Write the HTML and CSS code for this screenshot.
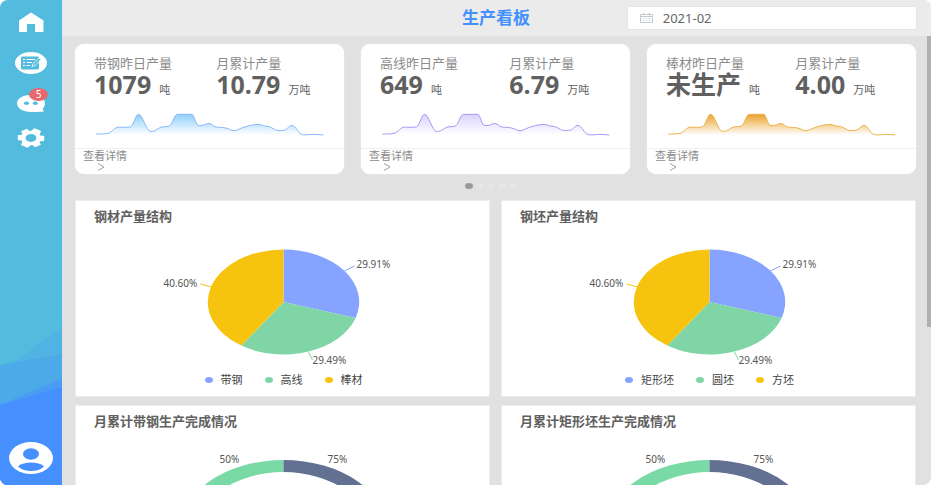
FILE: index.html
```html
<!DOCTYPE html>
<html lang="zh-CN">

<head>
    <meta charset="UTF-8">
    <meta name="viewport" content="width=device-width, initial-scale=1.0">
    <title>生产看板</title>
    <link rel="stylesheet" href="styles.css">
</head>

<body>
    <!-- shared shapes for the charts -->
    <svg class="defs" width="0" height="0" aria-hidden="true">
        <defs>
            <linearGradient id="fillBlue" x1="0" y1="0" x2="0" y2="1">
                <stop offset="0" stop-color="#8fd0f8" />
                <stop offset="1" stop-color="#ffffff" />
            </linearGradient>
            <linearGradient id="fillPurple" x1="0" y1="0" x2="0" y2="1">
                <stop offset="0" stop-color="#d9d3fd" />
                <stop offset="1" stop-color="#ffffff" />
            </linearGradient>
            <linearGradient id="fillOrange" x1="0" y1="0" x2="0" y2="1">
                <stop offset="0" stop-color="#eba32c" />
                <stop offset="1" stop-color="#ffffff" />
            </linearGradient>
            <path id="sparkLine" d="M1 64 C15 64 25 64 36 62 C50 58 55 43 68 43 C80 43 92 45 104 42 C114 36 118 5 128 4 C140 4 150 55 164 56 C180 58 186 43 201 42 C210 41 216 42 222 38 C232 30 234 4 245 4 L288 4 C297 10 298 38 309 38 C322 40 330 32 339 32 C349 32 350 42 361 43 C372 44 380 43 390 46 C400 48 405 54 414 54 C424 54 436 44 451 41 C464 37 474 35 486 35 C498 35 500 40 510 40 C530 42 534 53 546 53 C558 53 562 54 568 51 C578 46 578 38 588 38 C600 38 606 64 620 66 C634 68 640 65 650 65 C662 65 672 66 682 67" />
            <path id="sparkArea" d="M1 64 C15 64 25 64 36 62 C50 58 55 43 68 43 C80 43 92 45 104 42 C114 36 118 5 128 4 C140 4 150 55 164 56 C180 58 186 43 201 42 C210 41 216 42 222 38 C232 30 234 4 245 4 L288 4 C297 10 298 38 309 38 C322 40 330 32 339 32 C349 32 350 42 361 43 C372 44 380 43 390 46 C400 48 405 54 414 54 C424 54 436 44 451 41 C464 37 474 35 486 35 C498 35 500 40 510 40 C530 42 534 53 546 53 C558 53 562 54 568 51 C578 46 578 38 588 38 C600 38 606 64 620 66 L682 67 L1 67 Z" />
            <g id="pie">
                <path fill="#85a3ff" d="M200 62 V9.500 A75.700 52.500 0 0 1 272.100 78 Z" />
                <path fill="#7fd5a6" d="M200 62 L272.100 78 A75.700 52.500 0 0 1 157.800 105.600 Z" />
                <path fill="#f6c40e" d="M200 62 L157.800 105.600 A75.700 52.500 0 0 1 200 9.500 Z" />
                <path class="lead" stroke="#85a3ff" d="M261 31 L271 26" />
                <path class="lead" stroke="#7fd5a6" d="M225 112 L229 120" />
                <path class="lead" stroke="#f6c40e" d="M117 44 L128 47" />
            </g>
            <g id="ring">
                <path fill="#7adaa5" d="M200 15 A105 73 0 0 0 200 161 V149 A87 61 0 0 1 200 27 Z" />
                <path fill="#627092" d="M200 15 A105 73 0 0 1 200 161 V149 A87 61 0 0 0 200 27 Z" />
            </g>
        </defs>
    </svg>

    <div class="app">
        <nav class="sidebar">
            <svg class="waves" viewBox="0 0 62 160" preserveAspectRatio="none" aria-hidden="true">
                <path fill="#50b3e3" d="M0 48 L62 2 V160 H0 Z" />
                <path fill="#4caae9" d="M0 40 L62 29 V160 H0 Z" />
                <path fill="#4a9df3" d="M0 80 L62 53 V160 H0 Z" />
                <path fill="#468fff" d="M0 80 L62 62 V160 H0 Z" />
            </svg>

            <a class="nav-link" href="#" aria-label="首页">
                <svg width="26" height="24" viewBox="0 0 26 24">
                    <path fill="#fff" d="M13 .5 L25.500 8.500 V20 H17 V12 H9 V20 H1 V8.500 Z" />
                </svg>
            </a>
            <a class="nav-link" href="#" aria-label="报表">
                <svg width="32" height="22" viewBox="0 0 32 22">
                    <ellipse cx="16" cy="11" rx="16" ry="11" fill="#fff" />
                    <rect x="6" y="4.500" width="18" height="13" rx="1.500" fill="#53bbde" />
                    <path stroke="#fff" stroke-width="1" d="M8 7.500 H10 M11.500 7.500 H20 M8 10.500 H10 M11.500 10.500 H17 M8 13.500 H10 M11.500 13.500 H15" />
                    <path fill="#53bbde" stroke="#fff" stroke-width=".8" d="M17 14.500 L18 11.500 L24 6 L26 7.500 L20 13.500 Z" />
                </svg>
            </a>
            <a class="nav-link" href="#" aria-label="消息">
                <svg width="28" height="22" viewBox="0 0 28 22">
                    <path fill="#fff" d="M14 5 C21.500 5 28 8.500 28 13 C28 15.500 27 17.500 25.500 19 L27 21.500 C20 22 19 22 14 22 C6 22 0 18.500 0 13.300 C0 8.500 6 5 14 5 Z" />
                    <ellipse cx="9.500" cy="13.300" rx="2.500" ry="1.700" fill="#53bbde" />
                    <ellipse cx="18.300" cy="13.300" rx="2.500" ry="1.700" fill="#53bbde" />
                </svg>
                <span class="badge">5</span>
            </a>
            <a class="nav-link" href="#" aria-label="设置">
                <svg width="28" height="20" viewBox="1 1 22 22" preserveAspectRatio="none">
                    <path fill="#fff" stroke="#fff" stroke-width="1.500" stroke-linejoin="round" transform="rotate(30 12 12)" d="M19.400 13 C19.500 12.300 19.500 11.700 19.400 11 L21.600 9.300 L19.500 5.700 L16.900 6.700 C16.400 6.300 15.800 6 15.200 5.700 L14.400 2 H9.600 L8.800 5.700 C8.200 6 7.600 6.300 7.100 6.700 L4.500 5.700 L2.400 9.300 L4.600 11 C4.500 11.700 4.500 12.300 4.600 13 L2.400 14.700 L4.500 18.300 L7.100 17.300 C7.600 17.700 8.200 18 8.800 18.300 L9.600 22 H14.400 L15.200 18.300 C15.800 18 16.400 17.700 16.900 17.300 L19.500 18.300 L21.600 14.700 Z" />
                    <circle cx="12" cy="12" r="4.300" fill="#53bbde" />
                </svg>
            </a>
            <a class="nav-link user" href="#" aria-label="个人中心">
                <svg width="44" height="32" viewBox="0 0 44 32">
                    <ellipse cx="22" cy="16" rx="22" ry="16" fill="#fff" />
                    <ellipse cx="22" cy="12" rx="8" ry="5.800" fill="#468fff" />
                    <path fill="#468fff" d="M9 24.500 C12 21.500 17 20.500 22 20.500 C27 20.500 32 21.500 35 24.500 C32 27.500 27 29 22 29 C17 29 12 27.500 9 24.500 Z" />
                </svg>
            </a>
        </nav>

        <div class="page">
            <header class="topbar">
                <h1>生产看板</h1>
                <label class="date-box">
                    <svg width="13" height="10" viewBox="0 0 13 10" fill="none" stroke="#c5c9d2" aria-hidden="true">
                        <path d="M.5 1.500 H12.500 V9.500 H.5 Z M.5 3.500 H12.500 M3.500 0 V2.500 M9.500 0 V2.500" />
                        <path stroke="#e0e2e8" stroke-dasharray="2 1" d="M2.500 5.500 H11 M2.500 7.500 H11" />
                    </svg>
                    <input type="text" value="2021-02" aria-label="选择月份">
                </label>
            </header>

            <main class="content">
                <section class="cards">
                    <article class="card blue">
                        <div class="figures">
                            <div class="figure">
                                <p>带钢昨日产量</p>
                                <strong>1079</strong><span>吨</span>
                            </div>
                            <div class="figure">
                                <p>月累计产量</p>
                                <strong>10.79</strong><span>万吨</span>
                            </div>
                        </div>
                        <svg class="spark" viewBox="0 0 684 70" preserveAspectRatio="none">
                            <use href="#sparkArea" fill="url(#fillBlue)" />
                            <use class="line" href="#sparkLine" />
                        </svg>
                        <a class="more" href="#">查看详情
                            <svg width="8" height="8" viewBox="0 0 8 8"><path d="M1 .5 L7 4 L1 7.500" /></svg>
                        </a>
                    </article>

                    <article class="card purple">
                        <div class="figures">
                            <div class="figure">
                                <p>高线昨日产量</p>
                                <strong>649</strong><span>吨</span>
                            </div>
                            <div class="figure">
                                <p>月累计产量</p>
                                <strong>6.79</strong><span>万吨</span>
                            </div>
                        </div>
                        <svg class="spark" viewBox="0 0 684 70" preserveAspectRatio="none">
                            <use href="#sparkArea" fill="url(#fillPurple)" />
                            <use class="line" href="#sparkLine" />
                        </svg>
                        <a class="more" href="#">查看详情
                            <svg width="8" height="8" viewBox="0 0 8 8"><path d="M1 .5 L7 4 L1 7.500" /></svg>
                        </a>
                    </article>

                    <article class="card orange">
                        <div class="figures">
                            <div class="figure">
                                <p>棒材昨日产量</p>
                                <strong>未生产</strong><span>吨</span>
                            </div>
                            <div class="figure">
                                <p>月累计产量</p>
                                <strong>4.00</strong><span>万吨</span>
                            </div>
                        </div>
                        <svg class="spark" viewBox="0 0 684 70" preserveAspectRatio="none">
                            <use href="#sparkArea" fill="url(#fillOrange)" />
                            <use class="line" href="#sparkLine" />
                        </svg>
                        <a class="more" href="#">查看详情
                            <svg width="8" height="8" viewBox="0 0 8 8"><path d="M1 .5 L7 4 L1 7.500" /></svg>
                        </a>
                    </article>
                </section>

                <div class="dots">
                    <button type="button" class="active" aria-label="第1页"></button>
                    <button type="button" aria-label="第2页"></button>
                    <button type="button" aria-label="第3页"></button>
                    <button type="button" aria-label="第4页"></button>
                    <button type="button" aria-label="第5页"></button>
                </div>

                <section class="panels">
                    <article class="panel">
                        <h2>钢材产量结构</h2>
                        <svg class="chart" height="130" viewBox="0 0 400 130">
                            <use href="#pie" />
                            <text x="273" y="28">29.91%</text>
                            <text x="80" y="47">40.60%</text>
                            <text x="229" y="124">29.49%</text>
                        </svg>
                        <ul class="legend">
                            <li class="c1">带钢</li>
                            <li class="c2">高线</li>
                            <li class="c3">棒材</li>
                        </ul>
                    </article>

                    <article class="panel">
                        <h2>钢坯产量结构</h2>
                        <svg class="chart" height="130" viewBox="0 0 400 130">
                            <use href="#pie" />
                            <text x="273" y="28">29.91%</text>
                            <text x="80" y="47">40.60%</text>
                            <text x="229" y="124">29.49%</text>
                        </svg>
                        <ul class="legend">
                            <li class="c1">矩形坯</li>
                            <li class="c2">圆坯</li>
                            <li class="c3">方坯</li>
                        </ul>
                    </article>

                    <article class="panel">
                        <h2>月累计带钢生产完成情况</h2>
                        <svg class="chart" height="170" viewBox="0 0 400 170">
                            <use href="#ring" />
                            <text x="136" y="18">50%</text>
                            <text x="244" y="18">75%</text>
                        </svg>
                    </article>

                    <article class="panel">
                        <h2>月累计矩形坯生产完成情况</h2>
                        <svg class="chart" height="170" viewBox="0 0 400 170">
                            <use href="#ring" />
                            <text x="136" y="18">50%</text>
                            <text x="244" y="18">75%</text>
                        </svg>
                    </article>
                </section>
            </main>
            <div class="scroll-thumb"></div>
        </div>
    </div>
</body>

</html>
```
FILE: styles.css
```css
* {
    box-sizing: border-box;
}

body {
    margin: 0;
    background: #fff;
    color: #606060;
    font-family: "Noto Sans", "Noto Sans CJK SC", sans-serif;
    font-size: 13px;
}

h1, h2, p, ul {
    margin: 0;
    padding: 0;
}

svg {
    display: block;
}

.defs {
    position: absolute;
}

.app {
    display: flex;
    height: 100vh;
    border-radius: 8px;
    overflow: hidden;
    background: #e1e1e1;
}

/* sidebar */
.sidebar {
    position: relative;
    flex: none;
    display: flex;
    flex-direction: column;
    align-items: center;
    gap: 16px;
    width: 62px;
    padding: 12px 0 11px;
    background: #53bbde;
}

.waves {
    position: absolute;
    left: 0;
    bottom: 0;
    width: 100%;
    height: 160px;
}

.nav-link {
    position: relative;
}

.user {
    margin-top: auto;
}

.badge {
    position: absolute;
    top: -2px;
    right: -3px;
    width: 19px;
    height: 13px;
    border-radius: 50%;
    background: #e8686e;
    color: #fff;
    font-size: 10px;
    line-height: 13px;
    text-align: center;
}

/* header */
.page {
    position: relative;
    flex: 1;
    display: flex;
    flex-direction: column;
    min-width: 0;
}

.topbar {
    flex: none;
    display: grid;
    grid-template-columns: 1fr auto 1fr;
    align-items: center;
    height: 36px;
    padding: 0 14px 0 13px;
    background: #ebebeb;
}

.topbar h1 {
    grid-column: 2;
    color: #4590ff;
    font-size: 17px;
    line-height: 24px;
}

.date-box {
    justify-self: end;
    display: flex;
    align-items: center;
    gap: 10px;
    width: 75%;
    height: 24px;
    padding: 0 12px;
    border: 1px solid #e2e4ea;
    border-radius: 3px;
    background: #fff;
}

.date-box svg {
    flex: none;
}

.date-box input {
    flex: 1;
    min-width: 0;
    padding: 0;
    border: 0;
    outline: 0;
    background: none;
    color: #666;
    font: inherit;
    line-height: 20px;
}

/* content */
.content {
    flex: 1;
    min-height: 0;
    overflow: hidden;
    padding: 8px 15px 0 13px;
}

.scroll-thumb {
    position: absolute;
    top: 36px;
    right: 0;
    width: 4px;
    height: 60%;
    background: #b0b0b0;
}

.cards {
    display: grid;
    grid-template-columns: repeat(3, 1fr);
    gap: 17px;
}

.card {
    border-radius: 9px;
    background: #fff;
    box-shadow: 0 0 2px rgba(255, 255, 255, 0.6);
}

.figures {
    display: grid;
    grid-template-columns: 40% 60%;
    height: 66px;
    padding-top: 11px;
    white-space: nowrap;
}

.figure:first-child {
    padding-left: 19px;
}

.figure:last-child {
    justify-self: center;
}

.figure p {
    color: #8c8c8c;
    line-height: 16px;
}

.figure strong {
    font-size: 25px;
    line-height: 26px;
}

.figure span {
    margin-left: 8px;
    font-size: 11px;
}

.spark {
    width: calc(100% - 41px);
    height: 23px;
    margin: 3px 20px 12px 21px;
    overflow: visible;
}

.spark .line {
    fill: none;
    stroke-width: 3px;
}

.blue .line {
    stroke: #86b6fb;
}

.purple .line {
    stroke: #a795f5;
}

.orange .line {
    stroke: #ecb04c;
}

.more {
    display: block;
    height: 26px;
    padding: 0 8px;
    border-top: 1px solid #f0f0f0;
    color: #8c8c8c;
    font-size: 11px;
    line-height: 14px;
    text-decoration: none;
}

.more svg {
    margin-left: 14px;
    fill: none;
    stroke: #a0a0a0;
}

.dots {
    display: flex;
    justify-content: center;
    gap: 3px;
    padding: 9px 9px 11px 0;
}

.dots button {
    width: 8px;
    height: 6px;
    padding: 0;
    border: 0;
    border-radius: 50%;
    background: #e6e6e6;
}

.dots .active {
    background: #999;
}

/* panels */
.panels {
    display: grid;
    grid-template-columns: 1fr 1fr;
    gap: 8px 11px;
}

.panel {
    height: 197px;
    padding: 5px 0 0 2px;
    overflow: hidden;
    border: 1px solid #ececec;
    background: #fff;
}

.panel h2 {
    padding-left: 16px;
    font-size: 13px;
    line-height: 20px;
}

.chart {
    width: 100%;
    margin-top: 14px;
}

.chart text {
    fill: #555;
    font-size: 10px;
}

.lead {
    fill: none;
    stroke-width: 1px;
}

.legend {
    display: flex;
    justify-content: center;
    gap: 22px;
    margin-top: 3px;
    color: #444;
    font-size: 11px;
    line-height: 14px;
    list-style: none;
}

.legend li {
    display: flex;
    align-items: center;
    gap: 8px;
}

.legend li::before {
    content: "";
    width: 8px;
    height: 6px;
    border-radius: 50%;
    background: #85a3ff;
}

.legend .c2::before {
    background: #7fd5a6;
}

.legend .c3::before {
    background: #f6c40e;
}
```
